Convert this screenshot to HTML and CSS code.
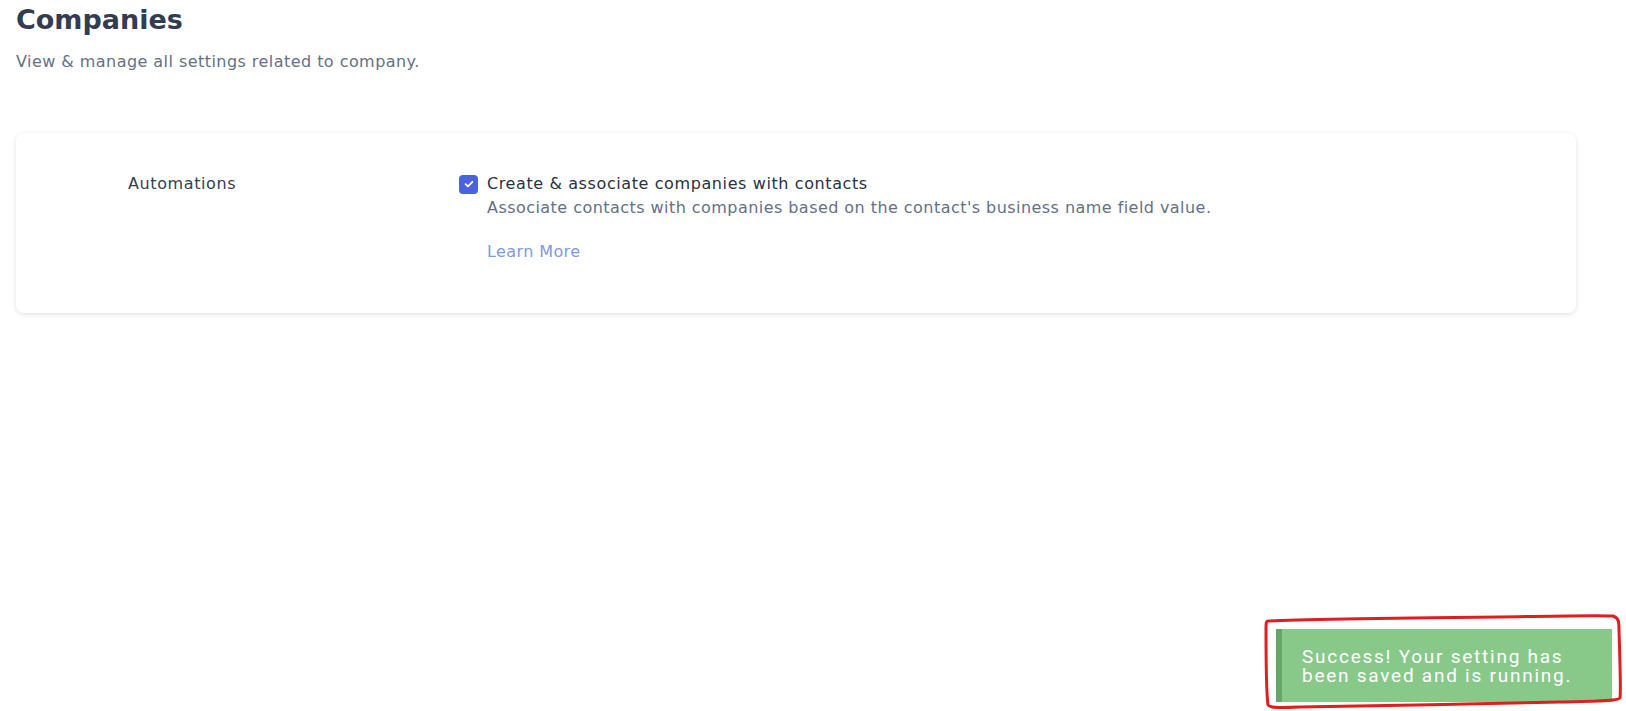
FILE: index.html
```html
<!DOCTYPE html>
<html lang="en">
<head>
<meta charset="utf-8">
<title>Companies</title>
<link rel="stylesheet" href="styles.css">
</head>
<body>
<main class="page">
  <header class="page-header">
    <h1 class="title">Companies</h1>
    <p class="subtitle">View &amp; manage all settings related to company.</p>
  </header>
  <section class="card">
    <div class="row">
      <div class="row-label">Automations</div>
      <div class="row-body">
        <label class="check">
          <span class="box">
            <svg viewBox="0 0 12 12" width="12" height="12"><path d="M2.6 6.2l2.3 2.2 4.5-4.6" fill="none" stroke="#fff" stroke-width="1.8" stroke-linecap="round" stroke-linejoin="round"/></svg>
          </span>
          <span class="check-text">Create &amp; associate companies with contacts</span>
        </label>
        <p class="desc">Associate contacts with companies based on the contact's business name field value.</p>
        <a class="learn" href="#">Learn More</a>
      </div>
    </div>
  </section>
</main>
<div class="toast">
  <div class="toast-text">Success! Your setting has been saved and is running.</div>
</div>
<svg class="annot" width="364" height="98" viewBox="1260 614 364 98">
  <path d="M1268 621 C1300 619 1400 618 1500 617 C1560 616 1600 615 1613 616 C1619 618 1619 622 1619 630 C1620 660 1621 690 1620 698 C1618 701 1600 701 1560 702 C1480 704 1380 706 1300 707 C1280 708 1270 708 1268 705 C1266 690 1266 650 1266 630 C1266 624 1266 621 1268 621 Z" fill="none" stroke="#e11d1d" stroke-width="3" stroke-linejoin="round"/>
</svg>
</body>
</html>
```

FILE: styles.css
```css
html, body {
  margin: 0;
  padding: 0;
  background: #ffffff;
}
body {
  font-family: "DejaVu Sans", "Open Sans", sans-serif;
  color: #2d3648;
  width: 1626px;
  height: 711px;
  overflow: hidden;
  position: relative;
}
.page {
  padding: 0 50px 0 16px;
}
.page-header {
  padding-top: 2px;
}
.title {
  margin: 0;
  font-size: 27px;
  line-height: 36px;
  font-weight: 700;
  color: #343c51;
}
.subtitle {
  margin: 13px 0 0;
  font-size: 16px;
  line-height: 22px;
  letter-spacing: 0.45px;
  color: #667085;
}
.card {
  margin-top: 60px;
  background: #fff;
  border-radius: 8px;
  box-shadow: 0 1px 4px rgba(0,0,0,0.08), 0 2px 6px rgba(0,0,0,0.05);
  padding: 40px 0 50px 112px;
}
.row {
  display: flex;
}
.row-label {
  width: 331px;
  flex: none;
  font-size: 16px;
  line-height: 22px;
  letter-spacing: 0.6px;
  color: #344054;
}
.row-body {
  display: flex;
  flex-direction: column;
  align-items: flex-start;
}
.check {
  display: flex;
  align-items: center;
  gap: 9px;
}
.box {
  width: 19px;
  height: 19px;
  border-radius: 4px;
  background: #4a61e0;
  display: flex;
  align-items: center;
  justify-content: center;
}
.check-text {
  font-size: 16px;
  line-height: 22px;
  letter-spacing: 0.6px;
  color: #2a3142;
}
.desc {
  margin: 2px 0 0 28px;
  font-size: 16px;
  line-height: 22px;
  letter-spacing: 0.45px;
  color: #667085;
}
.learn {
  margin: 22px 0 0 28px;
  font-size: 16px;
  line-height: 22px;
  letter-spacing: 0.4px;
  color: #7c9be3;
  text-decoration: none;
}
.toast {
  position: absolute;
  right: 14px;
  bottom: 9px;
  width: 330px;
  height: 73px;
  background: #88c98a;
  border-left: 6px solid #67a567;
  display: flex;
  align-items: center;
  box-sizing: content-box;
}
.toast-text {
  width: 292px;
  padding-left: 20px;
  font-family: Roboto, "Liberation Sans", sans-serif;
  font-size: 19px;
  line-height: 19px;
  letter-spacing: 1.75px;
  color: #ffffff;
}
.annot {
  position: absolute;
  left: 1260px;
  top: 614px;
}
```
